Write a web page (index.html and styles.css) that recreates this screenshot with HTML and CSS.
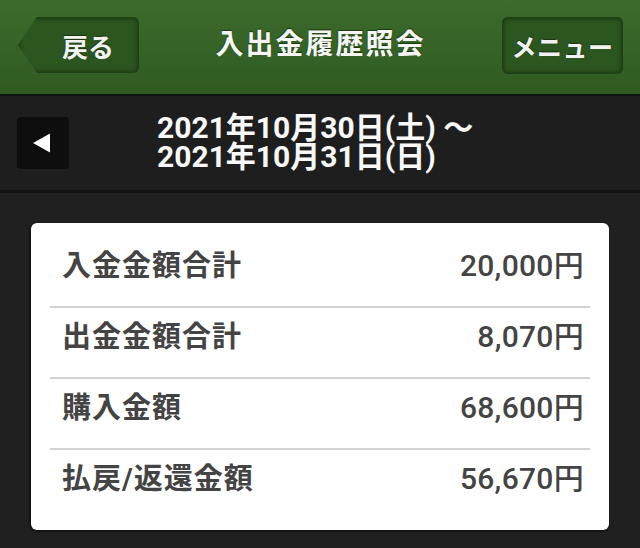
FILE: index.html
```html
<!DOCTYPE html>
<html lang="ja">
<head>
<meta charset="utf-8">
<link rel="stylesheet" href="styles.css">
</head>
<body>
<div class="app">
  <header class="topbar">
    <div class="back-btn"><span>戻る</span></div>
    <h1 class="title">入出金履歴照会</h1>
    <div class="menu-btn">メニュー</div>
  </header>
  <div class="datebar">
    <div class="prev-btn"><svg width="18" height="20" viewBox="0 0 18 20"><polygon points="0,10 17,0.5 17,19.5" fill="#fff"/></svg></div>
    <div class="range">
      <div class="line">2021年10月30日(土) ～</div>
      <div class="line">2021年10月31日(日)</div>
    </div>
  </div>
  <main class="content">
    <section class="card">
      <div class="row"><span class="label">入金金額合計</span><span class="value">20,000円</span></div>
      <div class="row"><span class="label">出金金額合計</span><span class="value">8,070円</span></div>
      <div class="row"><span class="label">購入金額</span><span class="value">68,600円</span></div>
      <div class="row"><span class="label">払戻/返還金額</span><span class="value">56,670円</span></div>
    </section>
  </main>
</div>
</body>
</html>
```
FILE: styles.css
```css
* { box-sizing: border-box; }
html, body {
  margin: 0;
  padding: 0;
  background: #202020;
  width: 640px;
  height: 548px;
  overflow: hidden;
  font-family: "Roboto", "Noto Sans CJK JP", sans-serif;
}
.app {
  display: flex;
  flex-direction: column;
  height: 548px;
}
.topbar {
  height: 96px;
  background: linear-gradient(#3c6b2b, #2f5b21);
  border-bottom: 2px solid #101410;
  display: grid;
  grid-template-columns: 1fr auto 1fr;
  align-items: start;
  padding: 17px 17px 0 18px;
}
.back-btn {
  justify-self: start;
  width: 121px;
  height: 56px;
  padding-left: 19px;
  display: flex;
  align-items: center;
  justify-content: center;
  background: #2c5620;
  clip-path: polygon(19px 0, 100% 0, 100% 100%, 19px 100%, 0 50%);
  border-radius: 0 6px 6px 0;
  box-shadow: inset 0 0 4px 2px #1c3a13;
  color: #f2f2f2;
  font-size: 26px;
  font-weight: bold;
  text-shadow: 0 -1px 1px #1a3310;
}
.title {
  margin: 0;
  padding-top: 11px;
  color: #f5f5f5;
  font-size: 28px;
  font-weight: bold;
  letter-spacing: 2px;
  line-height: 34px;
  text-shadow: 0 -1px 1px #1a3310;
}
.menu-btn {
  justify-self: end;
  width: 121px;
  height: 57px;
  display: flex;
  align-items: center;
  justify-content: center;
  background: #2c5620;
  border-radius: 6px;
  box-shadow: inset 0 0 4px 2px #1c3a13;
  color: #f2f2f2;
  font-size: 25px;
  font-weight: bold;
  letter-spacing: 0.5px;
  text-shadow: 0 -1px 1px #1a3310;
}
.datebar {
  height: 97px;
  background: #1e1e1e;
  border-bottom: 3px solid #121212;
  display: flex;
  align-items: center;
  padding-left: 17px;
}
.prev-btn {
  width: 52px;
  height: 52px;
  background: #0e0e0e;
  border-radius: 4px;
  display: flex;
  align-items: center;
  justify-content: center;
  padding-right: 2px;
  margin-top: -1px;
}
.range {
  margin-left: 88px;
  color: #f8f8f8;
  font-size: 30px;
  font-weight: bold;
  line-height: 29px;
  margin-top: -2px;
}
.content {
  flex: 1;
  padding: 30px 31px 0 31px;
}
.card {
  background: #fff;
  border-radius: 6px;
  box-shadow: -1px 1px 3px rgba(0,0,0,0.7);
  height: 307px;
  padding: 14px 19px 0 19px;
}
.row {
  height: 71px;
  padding: 14px 6px 0 12px;
  border-bottom: 2px solid #d2d2d2;
  display: flex;
  justify-content: space-between;
  align-items: flex-start;
  line-height: 30px;
  color: #444;
}
.row:last-child { border-bottom: none; }
.label {
  font-size: 29px;
  font-weight: bold;
  letter-spacing: 1px;
}
.value {
  font-size: 30px;
  font-weight: 500;
  letter-spacing: 0.3px;
}
```
